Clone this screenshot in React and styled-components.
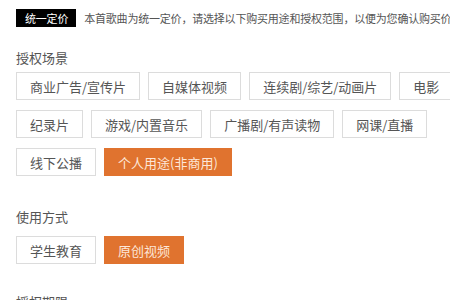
import React from "react";
import styled, { createGlobalStyle } from "styled-components";

const GlobalStyle = createGlobalStyle`
  html, body {
    margin: 0;
    padding: 0;
    background: #fff;
    overflow: hidden;
  }
  body {
    font-family: "Noto Sans CJK SC", "Noto Sans", sans-serif;
  }
`;

const scenes = [
  "商业广告/宣传片",
  "自媒体视频",
  "连续剧/综艺/动画片",
  "电影",
  "纪录片",
  "游戏/内置音乐",
  "广播剧/有声读物",
  "网课/直播",
  "线下公播",
  "个人用途(非商用)",
];

const usages = ["学生教育", "原创视频"];

const App = () => {
  return (
    <Page>
      <GlobalStyle />
      <TopBar>
        <Tag>统一定价</Tag>
        <Desc>本首歌曲为统一定价，请选择以下购买用途和授权范围，以便为您确认购买价格</Desc>
      </TopBar>

      <Section $top={22}>
        <Title>授权场景</Title>
        <Options $top={5}>
          {scenes.map((s) => (
            <Option key={s} $active={s === "个人用途(非商用)"}>{s}</Option>
          ))}
        </Options>
      </Section>

      <Section $top={32}>
        <Title>使用方式</Title>
        <Options $top={10}>
          {usages.map((s) => (
            <Option key={s} $active={s === "原创视频"}>{s}</Option>
          ))}
        </Options>
      </Section>

      <Section $top={29}>
        <Title>授权期限</Title>
      </Section>
    </Page>
  );
};

export default App;

const Page = styled.div`
  width: 500px;
  padding: 9px 0 0 16px;
  box-sizing: border-box;
`;

const TopBar = styled.div`
  display: flex;
  align-items: center;
  height: 18px;
  white-space: nowrap;
`;

const Tag = styled.span`
  display: flex;
  align-items: center;
  height: 18px;
  padding: 0 8px 0 9px;
  background: #000;
  color: #fff;
  font-size: 11px;
  letter-spacing: -0.2px;
`;

const Desc = styled.span`
  margin-left: 8px;
  color: #555;
  font-size: 11px;
  letter-spacing: -0.2px;
`;

const Section = styled.section`
  margin-top: ${(p) => p.$top}px;
`;

const Title = styled.div`
  color: #555;
  font-size: 13px;
  line-height: 18px;
`;

const Options = styled.div`
  display: flex;
  flex-wrap: wrap;
  gap: 10px 8px;
  margin-top: ${(p) => p.$top}px;
`;

const Option = styled.div`
  display: flex;
  align-items: center;
  height: 28px;
  padding: 0 13px;
  box-sizing: border-box;
  border: 1px solid ${(p) => (p.$active ? "#e0732f" : "#dcdcdc")};
  background: ${(p) => (p.$active ? "#e0732f" : "#fff")};
  color: ${(p) => (p.$active ? "#fde7d8" : "#555")};
  font-size: 13px;
  white-space: nowrap;
  cursor: pointer;
`;
